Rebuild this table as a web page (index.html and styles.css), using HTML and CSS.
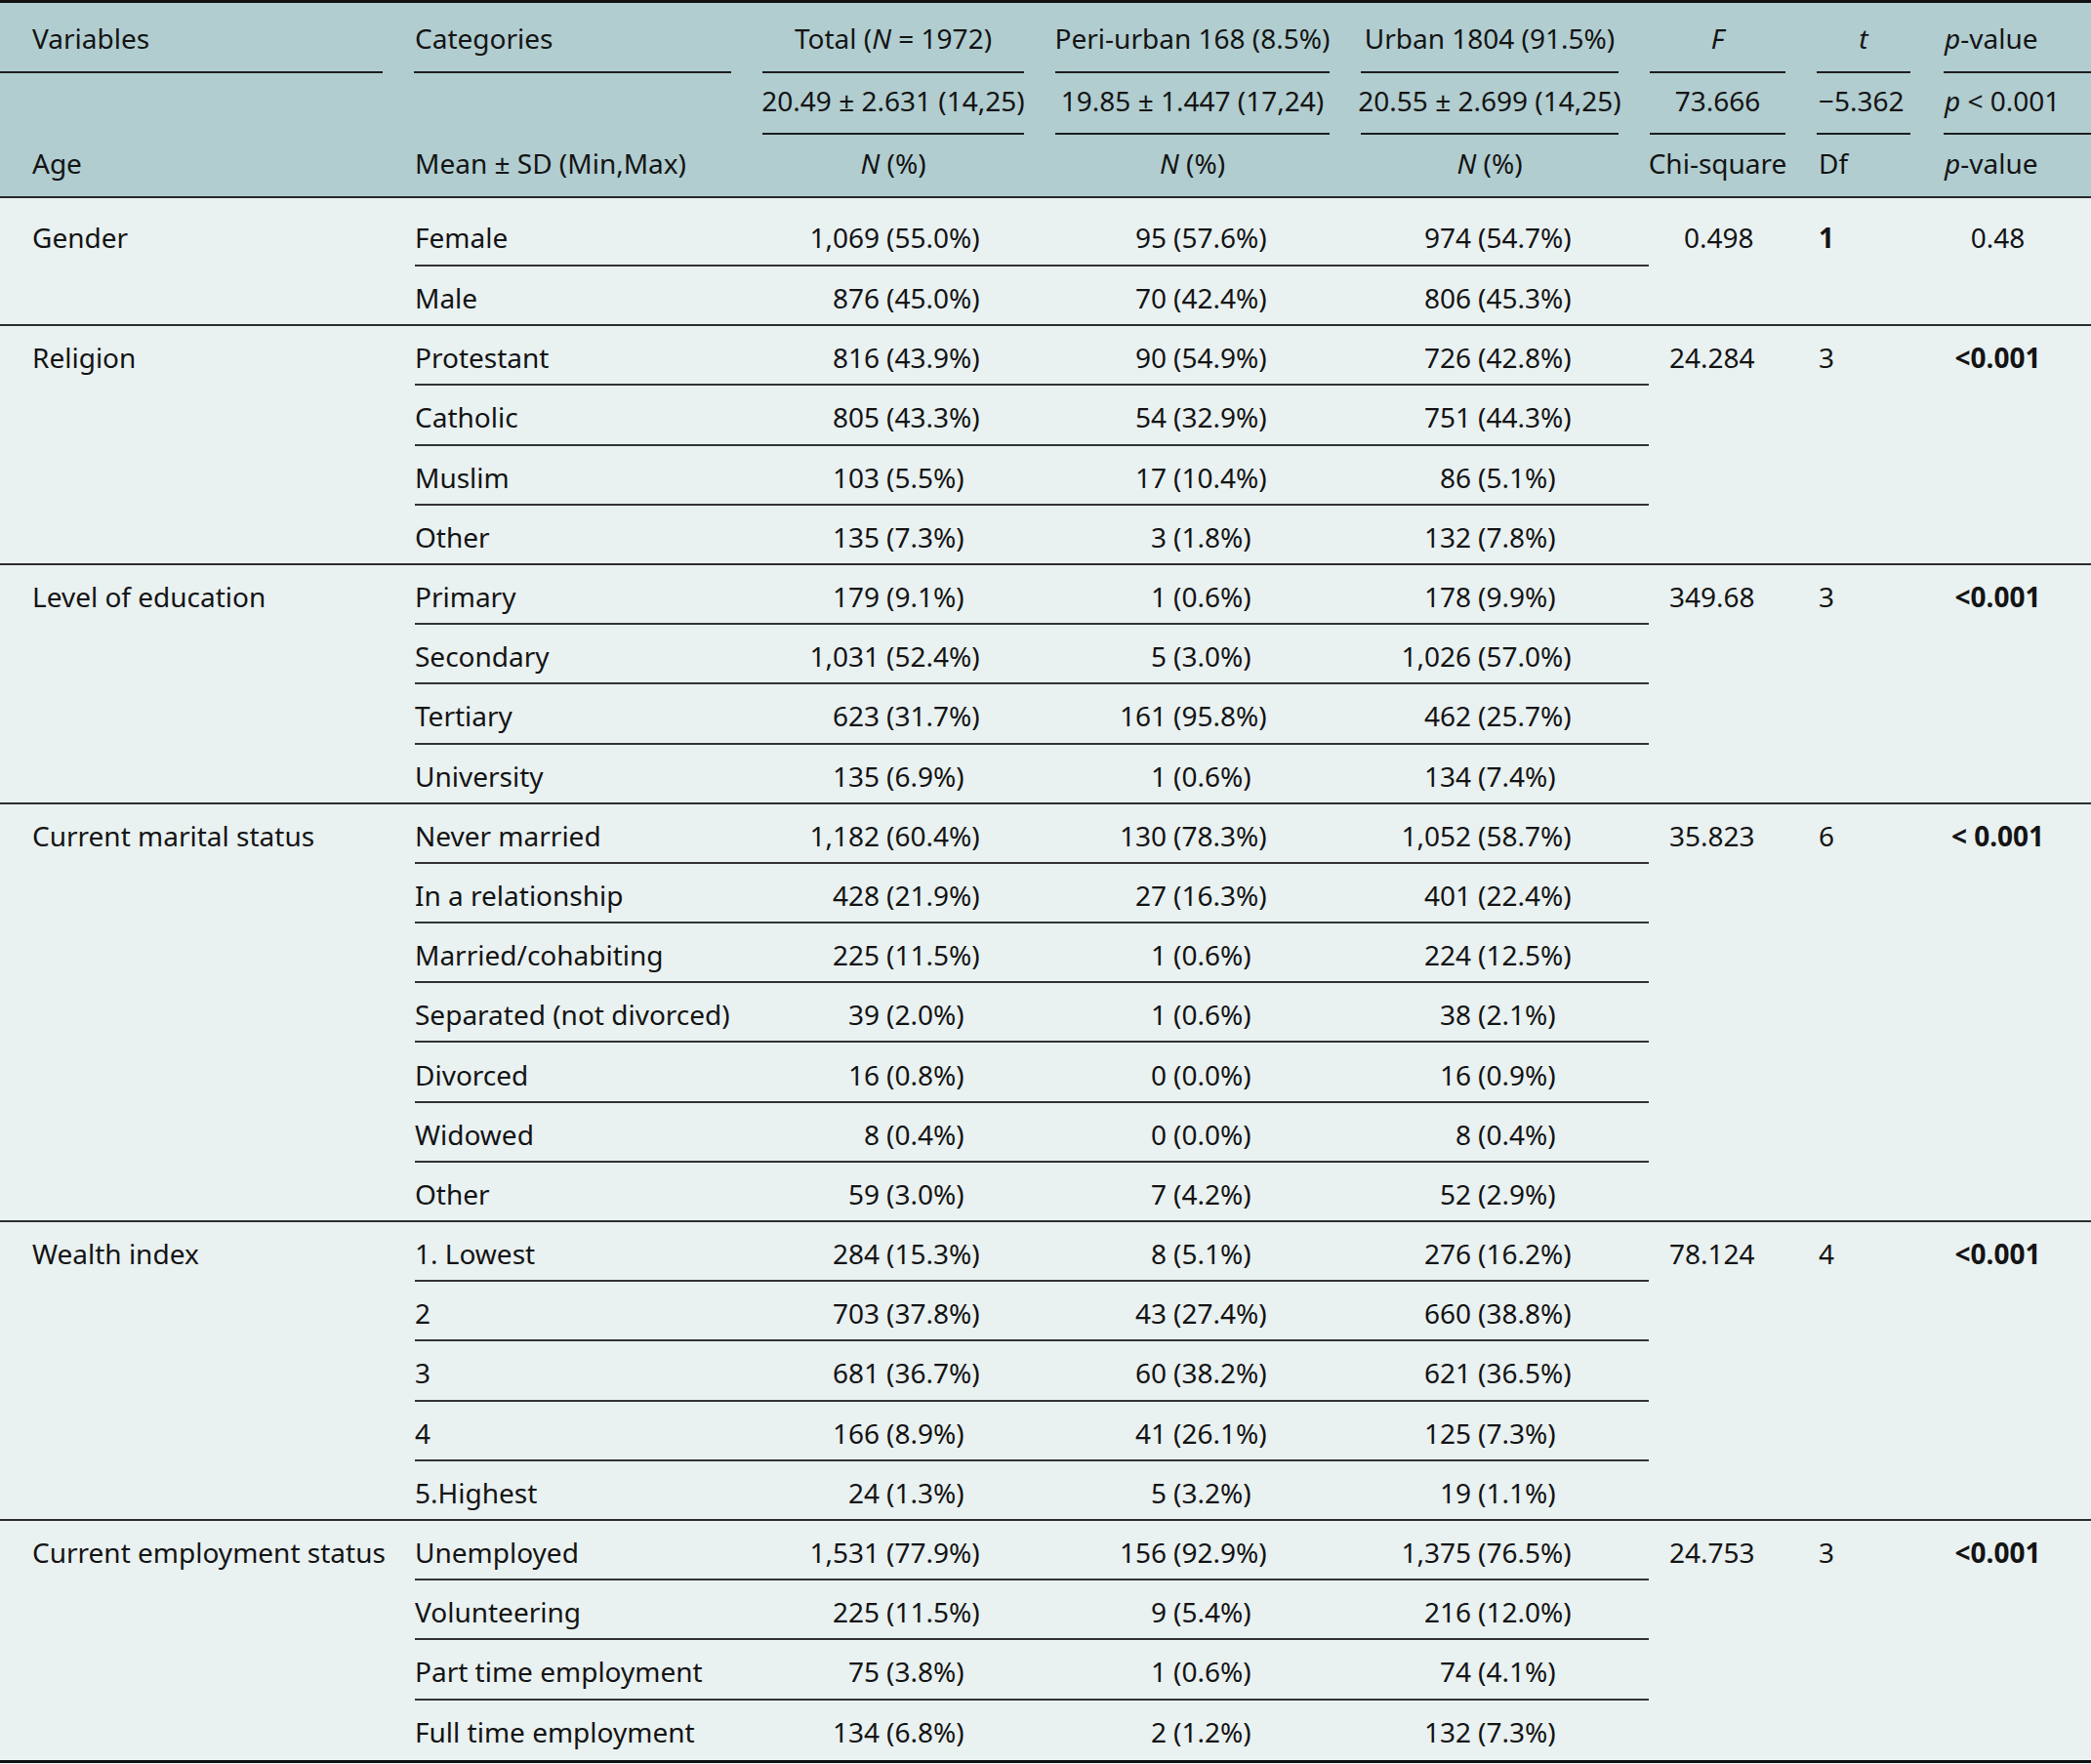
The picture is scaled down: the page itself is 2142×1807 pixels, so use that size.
FILE: index.html
```html
<!DOCTYPE html>
<html lang="en">
<head>
<meta charset="utf-8">
<title>Table</title>
<link rel="stylesheet" href="styles.css">
</head>
<body>
<table class="tbl">
  <colgroup>
    <col class="w1"><col class="w2"><col class="w3"><col class="w4"><col class="w5"><col class="w6"><col class="w7"><col class="w8">
  </colgroup>
  <thead>
    <tr class="hr1">
      <th class="c1 rule-first">Variables</th>
      <th class="c2 rule">Categories</th>
      <th class="ctr rule">Total (<i>N</i> = 1972)</th>
      <th class="ctr rule">Peri-urban 168 (8.5%)</th>
      <th class="ctr rule">Urban 1804 (91.5%)</th>
      <th class="ctr rule"><i>F</i></th>
      <th class="ctr rule"><i>t</i></th>
      <th class="c8 rule-last"><i>p</i>-value</th>
    </tr>
    <tr class="hr2">
      <th class="c1"></th>
      <th class="c2"></th>
      <th class="ctr rule">20.49 ± 2.631 (14,25)</th>
      <th class="ctr rule">19.85 ± 1.447 (17,24)</th>
      <th class="ctr rule">20.55 ± 2.699 (14,25)</th>
      <th class="ctr rule">73.666</th>
      <th class="c7 rule">−5.362</th>
      <th class="c8 rule-last"><i>p</i> &lt; 0.001</th>
    </tr>
    <tr class="hr3">
      <th class="c1">Age</th>
      <th class="c2">Mean ± SD (Min,Max)</th>
      <th class="ctr"><i>N</i> (%)</th>
      <th class="ctr"><i>N</i> (%)</th>
      <th class="ctr"><i>N</i> (%)</th>
      <th class="ctr">Chi-square</th>
      <th class="c7">Df</th>
      <th class="c8"><i>p</i>-value</th>
    </tr>
  </thead>

  <tbody class="grp first">
    <tr><td class="c1">Gender</td><td class="cat">Female</td>
      <td class="n t3"><div class="v"><span>1,069</span><span>(55.0%)</span></div></td>
      <td class="n t4"><div class="v"><span>95</span><span>(57.6%)</span></div></td>
      <td class="n t5"><div class="v"><span>974</span><span>(54.7%)</span></div></td>
      <td class="f f1">0.498</td><td class="df"><b>1</b></td><td class="pv">0.48</td></tr>
    <tr><td class="c1"></td><td class="cat">Male</td>
      <td class="n t3"><div class="v"><span>876</span><span>(45.0%)</span></div></td>
      <td class="n t4"><div class="v"><span>70</span><span>(42.4%)</span></div></td>
      <td class="n t5"><div class="v"><span>806</span><span>(45.3%)</span></div></td>
      <td class="f"></td><td class="df"></td><td class="pv"></td></tr>
  </tbody>

  <tbody class="grp">
    <tr><td class="c1">Religion</td><td class="cat">Protestant</td>
      <td class="n t3"><div class="v"><span>816</span><span>(43.9%)</span></div></td>
      <td class="n t4"><div class="v"><span>90</span><span>(54.9%)</span></div></td>
      <td class="n t5"><div class="v"><span>726</span><span>(42.8%)</span></div></td>
      <td class="f">24.284</td><td class="df">3</td><td class="pv"><b>&lt;0.001</b></td></tr>
    <tr><td class="c1"></td><td class="cat">Catholic</td>
      <td class="n t3"><div class="v"><span>805</span><span>(43.3%)</span></div></td>
      <td class="n t4"><div class="v"><span>54</span><span>(32.9%)</span></div></td>
      <td class="n t5"><div class="v"><span>751</span><span>(44.3%)</span></div></td>
      <td class="f"></td><td class="df"></td><td class="pv"></td></tr>
    <tr><td class="c1"></td><td class="cat">Muslim</td>
      <td class="n t3"><div class="v"><span>103</span><span>(5.5%)</span></div></td>
      <td class="n t4"><div class="v"><span>17</span><span>(10.4%)</span></div></td>
      <td class="n t5"><div class="v"><span>86</span><span>(5.1%)</span></div></td>
      <td class="f"></td><td class="df"></td><td class="pv"></td></tr>
    <tr><td class="c1"></td><td class="cat">Other</td>
      <td class="n t3"><div class="v"><span>135</span><span>(7.3%)</span></div></td>
      <td class="n t4"><div class="v"><span>3</span><span>(1.8%)</span></div></td>
      <td class="n t5"><div class="v"><span>132</span><span>(7.8%)</span></div></td>
      <td class="f"></td><td class="df"></td><td class="pv"></td></tr>
  </tbody>

  <tbody class="grp">
    <tr><td class="c1">Level of education</td><td class="cat">Primary</td>
      <td class="n t3"><div class="v"><span>179</span><span>(9.1%)</span></div></td>
      <td class="n t4"><div class="v"><span>1</span><span>(0.6%)</span></div></td>
      <td class="n t5"><div class="v"><span>178</span><span>(9.9%)</span></div></td>
      <td class="f">349.68</td><td class="df">3</td><td class="pv"><b>&lt;0.001</b></td></tr>
    <tr><td class="c1"></td><td class="cat">Secondary</td>
      <td class="n t3"><div class="v"><span>1,031</span><span>(52.4%)</span></div></td>
      <td class="n t4"><div class="v"><span>5</span><span>(3.0%)</span></div></td>
      <td class="n t5"><div class="v"><span>1,026</span><span>(57.0%)</span></div></td>
      <td class="f"></td><td class="df"></td><td class="pv"></td></tr>
    <tr><td class="c1"></td><td class="cat">Tertiary</td>
      <td class="n t3"><div class="v"><span>623</span><span>(31.7%)</span></div></td>
      <td class="n t4"><div class="v"><span>161</span><span>(95.8%)</span></div></td>
      <td class="n t5"><div class="v"><span>462</span><span>(25.7%)</span></div></td>
      <td class="f"></td><td class="df"></td><td class="pv"></td></tr>
    <tr><td class="c1"></td><td class="cat">University</td>
      <td class="n t3"><div class="v"><span>135</span><span>(6.9%)</span></div></td>
      <td class="n t4"><div class="v"><span>1</span><span>(0.6%)</span></div></td>
      <td class="n t5"><div class="v"><span>134</span><span>(7.4%)</span></div></td>
      <td class="f"></td><td class="df"></td><td class="pv"></td></tr>
  </tbody>

  <tbody class="grp">
    <tr><td class="c1">Current marital status</td><td class="cat">Never married</td>
      <td class="n t3"><div class="v"><span>1,182</span><span>(60.4%)</span></div></td>
      <td class="n t4"><div class="v"><span>130</span><span>(78.3%)</span></div></td>
      <td class="n t5"><div class="v"><span>1,052</span><span>(58.7%)</span></div></td>
      <td class="f">35.823</td><td class="df">6</td><td class="pv"><b>&lt; 0.001</b></td></tr>
    <tr><td class="c1"></td><td class="cat">In a relationship</td>
      <td class="n t3"><div class="v"><span>428</span><span>(21.9%)</span></div></td>
      <td class="n t4"><div class="v"><span>27</span><span>(16.3%)</span></div></td>
      <td class="n t5"><div class="v"><span>401</span><span>(22.4%)</span></div></td>
      <td class="f"></td><td class="df"></td><td class="pv"></td></tr>
    <tr><td class="c1"></td><td class="cat">Married/cohabiting</td>
      <td class="n t3"><div class="v"><span>225</span><span>(11.5%)</span></div></td>
      <td class="n t4"><div class="v"><span>1</span><span>(0.6%)</span></div></td>
      <td class="n t5"><div class="v"><span>224</span><span>(12.5%)</span></div></td>
      <td class="f"></td><td class="df"></td><td class="pv"></td></tr>
    <tr><td class="c1"></td><td class="cat">Separated (not divorced)</td>
      <td class="n t3"><div class="v"><span>39</span><span>(2.0%)</span></div></td>
      <td class="n t4"><div class="v"><span>1</span><span>(0.6%)</span></div></td>
      <td class="n t5"><div class="v"><span>38</span><span>(2.1%)</span></div></td>
      <td class="f"></td><td class="df"></td><td class="pv"></td></tr>
    <tr><td class="c1"></td><td class="cat">Divorced</td>
      <td class="n t3"><div class="v"><span>16</span><span>(0.8%)</span></div></td>
      <td class="n t4"><div class="v"><span>0</span><span>(0.0%)</span></div></td>
      <td class="n t5"><div class="v"><span>16</span><span>(0.9%)</span></div></td>
      <td class="f"></td><td class="df"></td><td class="pv"></td></tr>
    <tr><td class="c1"></td><td class="cat">Widowed</td>
      <td class="n t3"><div class="v"><span>8</span><span>(0.4%)</span></div></td>
      <td class="n t4"><div class="v"><span>0</span><span>(0.0%)</span></div></td>
      <td class="n t5"><div class="v"><span>8</span><span>(0.4%)</span></div></td>
      <td class="f"></td><td class="df"></td><td class="pv"></td></tr>
    <tr><td class="c1"></td><td class="cat">Other</td>
      <td class="n t3"><div class="v"><span>59</span><span>(3.0%)</span></div></td>
      <td class="n t4"><div class="v"><span>7</span><span>(4.2%)</span></div></td>
      <td class="n t5"><div class="v"><span>52</span><span>(2.9%)</span></div></td>
      <td class="f"></td><td class="df"></td><td class="pv"></td></tr>
  </tbody>

  <tbody class="grp">
    <tr><td class="c1">Wealth index</td><td class="cat">1. Lowest</td>
      <td class="n t3"><div class="v"><span>284</span><span>(15.3%)</span></div></td>
      <td class="n t4"><div class="v"><span>8</span><span>(5.1%)</span></div></td>
      <td class="n t5"><div class="v"><span>276</span><span>(16.2%)</span></div></td>
      <td class="f">78.124</td><td class="df">4</td><td class="pv"><b>&lt;0.001</b></td></tr>
    <tr><td class="c1"></td><td class="cat">2</td>
      <td class="n t3"><div class="v"><span>703</span><span>(37.8%)</span></div></td>
      <td class="n t4"><div class="v"><span>43</span><span>(27.4%)</span></div></td>
      <td class="n t5"><div class="v"><span>660</span><span>(38.8%)</span></div></td>
      <td class="f"></td><td class="df"></td><td class="pv"></td></tr>
    <tr><td class="c1"></td><td class="cat">3</td>
      <td class="n t3"><div class="v"><span>681</span><span>(36.7%)</span></div></td>
      <td class="n t4"><div class="v"><span>60</span><span>(38.2%)</span></div></td>
      <td class="n t5"><div class="v"><span>621</span><span>(36.5%)</span></div></td>
      <td class="f"></td><td class="df"></td><td class="pv"></td></tr>
    <tr><td class="c1"></td><td class="cat">4</td>
      <td class="n t3"><div class="v"><span>166</span><span>(8.9%)</span></div></td>
      <td class="n t4"><div class="v"><span>41</span><span>(26.1%)</span></div></td>
      <td class="n t5"><div class="v"><span>125</span><span>(7.3%)</span></div></td>
      <td class="f"></td><td class="df"></td><td class="pv"></td></tr>
    <tr><td class="c1"></td><td class="cat">5.Highest</td>
      <td class="n t3"><div class="v"><span>24</span><span>(1.3%)</span></div></td>
      <td class="n t4"><div class="v"><span>5</span><span>(3.2%)</span></div></td>
      <td class="n t5"><div class="v"><span>19</span><span>(1.1%)</span></div></td>
      <td class="f"></td><td class="df"></td><td class="pv"></td></tr>
  </tbody>

  <tbody class="grp last">
    <tr><td class="c1">Current employment status</td><td class="cat">Unemployed</td>
      <td class="n t3"><div class="v"><span>1,531</span><span>(77.9%)</span></div></td>
      <td class="n t4"><div class="v"><span>156</span><span>(92.9%)</span></div></td>
      <td class="n t5"><div class="v"><span>1,375</span><span>(76.5%)</span></div></td>
      <td class="f">24.753</td><td class="df">3</td><td class="pv"><b>&lt;0.001</b></td></tr>
    <tr><td class="c1"></td><td class="cat">Volunteering</td>
      <td class="n t3"><div class="v"><span>225</span><span>(11.5%)</span></div></td>
      <td class="n t4"><div class="v"><span>9</span><span>(5.4%)</span></div></td>
      <td class="n t5"><div class="v"><span>216</span><span>(12.0%)</span></div></td>
      <td class="f"></td><td class="df"></td><td class="pv"></td></tr>
    <tr><td class="c1"></td><td class="cat">Part time employment</td>
      <td class="n t3"><div class="v"><span>75</span><span>(3.8%)</span></div></td>
      <td class="n t4"><div class="v"><span>1</span><span>(0.6%)</span></div></td>
      <td class="n t5"><div class="v"><span>74</span><span>(4.1%)</span></div></td>
      <td class="f"></td><td class="df"></td><td class="pv"></td></tr>
    <tr><td class="c1"></td><td class="cat">Full time employment</td>
      <td class="n t3"><div class="v"><span>134</span><span>(6.8%)</span></div></td>
      <td class="n t4"><div class="v"><span>2</span><span>(1.2%)</span></div></td>
      <td class="n t5"><div class="v"><span>132</span><span>(7.3%)</span></div></td>
      <td class="f"></td><td class="df"></td><td class="pv"></td></tr>
  </tbody>
</table>
</body>
</html>
```

FILE: styles.css
```css
html, body {
  margin: 0;
  padding: 0;
  background: #e9f1f1;
}

.tbl {
  width: 2142px;
  table-layout: fixed;
  border-collapse: separate;
  border-spacing: 0;
  font-family: "Noto Sans", "Open Sans", sans-serif;
  font-size: 28px;
  color: #141414;
  background: #e9f1f1;
  border-top: 3px solid #111;
  border-bottom: 3px solid #111;
}

.w1 { width: 408px; }
.w2 { width: 357px; }
.w3 { width: 300px; }
.w4 { width: 313px; }
.w5 { width: 296px; }
.w6 { width: 171px; }
.w7 { width: 128px; }
.w8 { width: 169px; }

.tbl th,
.tbl td {
  padding: 0;
  white-space: nowrap;
  vertical-align: middle;
  font-weight: normal;
  text-align: left;
}

.tbl i { font-style: italic; }
.tbl b { font-weight: 700; }

/* ---------- header ---------- */
.tbl thead tr { background-color: #b1cdd0; }
.hr1 { height: 72px; }
.hr2 { height: 63px; }
.hr3 { height: 65px; }
.hr2 th, .hr3 th { padding-bottom: 8px; }

.tbl thead .c1 { padding-left: 33px; }
.tbl thead .c2 { padding-left: 17px; }
.tbl thead .ctr { text-align: center; }
.tbl thead .c7 { padding-left: 18px; }
.tbl thead .c8 { padding-left: 19px; }

.rule {
  background-image: linear-gradient(#1e1e1e, #1e1e1e);
  background-repeat: no-repeat;
  background-position: center bottom;
  background-size: calc(100% - 32px) 2px;
}
.rule-first {
  background-image: linear-gradient(#1e1e1e, #1e1e1e);
  background-repeat: no-repeat;
  background-position: left bottom;
  background-size: calc(100% - 16px) 2px;
}
.rule-last {
  background-image: linear-gradient(#1e1e1e, #1e1e1e);
  background-repeat: no-repeat;
  background-position: right bottom;
  background-size: calc(100% - 18px) 2px;
}
.hr3 th {
  background-image: linear-gradient(#2a2a2a, #2a2a2a);
  background-repeat: no-repeat;
  background-position: left bottom;
  background-size: 100% 2px;
}

/* ---------- body ---------- */
.tbl tbody tr { height: 61.2px; }
.tbl tbody td { padding-top: 3px; }
.tbl tbody.first tr:first-child { height: 70px; }
.tbl tbody.first tr:first-child td { padding-top: 10px; }

.tbl td.c1 { padding-left: 33px; }
.tbl td.cat { padding-left: 17px; }
.tbl td.f { padding-left: 36px; }
.tbl td.f1 { padding-left: 51px; }
.tbl td.df { padding-left: 18px; }
.tbl td.pv { text-align: center; padding-right: 22px; }

.v {
  display: grid;
  column-gap: 7px;
}
.v span:first-child { text-align: right; }
.t3 .v { grid-template-columns: 136px auto; }
.t4 .v { grid-template-columns: 130px auto; }
.t5 .v { grid-template-columns: 129px auto; }

/* lines inside a group */
.grp tr td.cat {
  background-image: linear-gradient(#333, #333);
  background-repeat: no-repeat;
  background-position: right bottom;
  background-size: calc(100% - 17px) 2px;
}
.grp tr td.n {
  background-image: linear-gradient(#333, #333);
  background-repeat: no-repeat;
  background-position: left bottom;
  background-size: 100% 2px;
}
.grp tr td.f {
  background-image: linear-gradient(#333, #333);
  background-repeat: no-repeat;
  background-position: left bottom;
  background-size: 15px 2px;
}

/* group separators span the full width */
.grp tr:last-child td,
.grp tr:last-child td.cat,
.grp tr:last-child td.n,
.grp tr:last-child td.f {
  background-image: linear-gradient(#2e2e2e, #2e2e2e);
  background-repeat: no-repeat;
  background-position: left bottom;
  background-size: 100% 2px;
}
.grp.last tr:last-child td,
.grp.last tr:last-child td.cat,
.grp.last tr:last-child td.n,
.grp.last tr:last-child td.f {
  background-image: none;
}
```
